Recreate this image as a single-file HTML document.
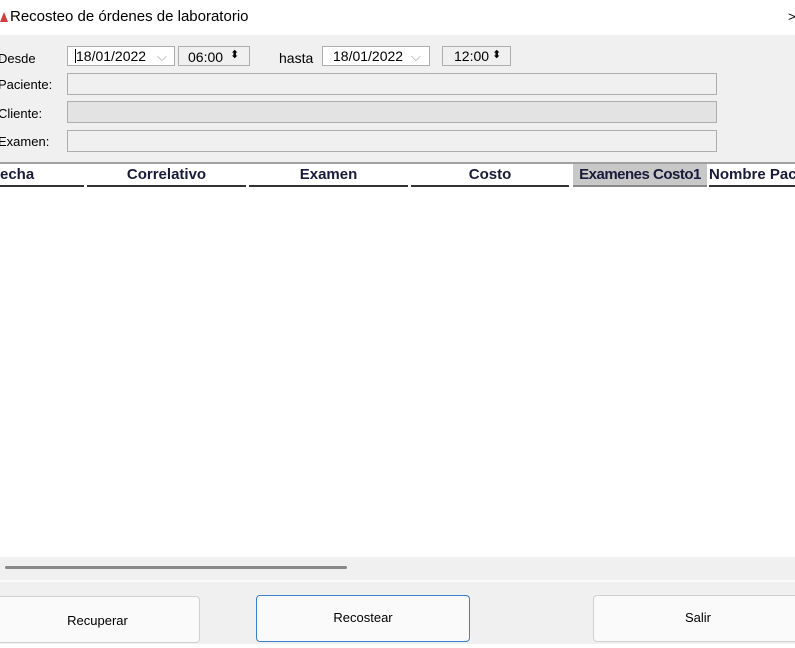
<!DOCTYPE html>
<html><head><style>
*{margin:0;padding:0;box-sizing:border-box}
body{width:795px;height:648px;position:relative;overflow:hidden;background:#fff;font-family:"Liberation Sans","DejaVu Sans",sans-serif;font-size:13px;color:#000}
.a{position:absolute}
.box{position:absolute;border:1px solid #adadad;background:#f0f0f0}
.lbl{position:absolute;font-size:13px}
.hd{position:absolute;top:164px;height:23px;font-weight:bold;font-size:15px;color:#1a1a3a;text-align:center;line-height:22px;border-bottom:2px solid #333;white-space:nowrap;overflow:hidden}
.btn{position:absolute;background:#fafafa;border:1px solid #d0d0d0;border-radius:4px;text-align:center;font-size:13px}
</style></head><body>
<div class="a" style="left:0;top:0;width:795px;height:35px;background:#fff"></div>
<div class="a" style="left:0;top:12px;width:0;height:0;border-left:4px solid transparent;border-right:4px solid transparent;border-bottom:10px solid #d04040"></div>
<div class="lbl" style="left:10px;top:8px;font-size:15px">Recosteo de órdenes de laboratorio</div>
<div class="lbl" style="left:788px;top:9px;font-size:13px">&gt;</div>
<div class="a" style="left:0;top:35px;width:795px;height:128px;background:#f0f0f0"></div>
<div class="lbl" style="left:-2px;top:51px">Desde</div>
<div class="a" style="left:67px;top:46px;width:108px;height:20px;background:#fff;border:1px solid #adadad"></div>
<div class="a" style="left:75px;top:49px;width:1px;height:14px;background:#000"></div>
<div class="lbl" style="left:76px;top:48px;font-size:14px">18/01/2022</div>
<div class="lbl" style="left:157px;top:49px;color:#999">⌵</div>
<div class="box" style="left:178px;top:46px;width:72px;height:20px"></div>
<div class="lbl" style="left:188px;top:49px;font-size:14px">06:00</div>
<div class="lbl" style="left:230px;top:48px;font-size:11px">⬍</div>
<div class="lbl" style="left:279px;top:50px;font-size:14px">hasta</div>
<div class="a" style="left:322px;top:46px;width:108px;height:20px;background:#fff;border:1px solid #adadad"></div>
<div class="lbl" style="left:333px;top:48px;font-size:14px">18/01/2022</div>
<div class="lbl" style="left:411px;top:49px;color:#999">⌵</div>
<div class="box" style="left:442px;top:46px;width:69px;height:20px"></div>
<div class="lbl" style="left:454px;top:48px;font-size:14px">12:00</div>
<div class="lbl" style="left:492px;top:48px;font-size:11px">⬍</div>
<div class="lbl" style="left:-2px;top:77px">Paciente:</div>
<div class="box" style="left:67px;top:73px;width:650px;height:22px"></div>
<div class="lbl" style="left:-2px;top:106px">Cliente:</div>
<div class="box" style="left:67px;top:101px;width:650px;height:22px;background:#e3e3e3"></div>
<div class="lbl" style="left:-2px;top:134px">Examen:</div>
<div class="box" style="left:67px;top:130px;width:650px;height:22px"></div>
<div class="a" style="left:0;top:162px;width:795px;height:2px;background:#a0a0a0"></div>
<div class="hd" style="left:0;width:84px;text-align:left">echa</div>
<div class="hd" style="left:87px;width:159px">Correlativo</div>
<div class="hd" style="left:249px;width:159px">Examen</div>
<div class="hd" style="left:411px;width:158px">Costo</div>
<div class="hd" style="left:573px;width:134px;background:#c8c8c8;border-bottom-color:#888;letter-spacing:-0.5px">Examenes Costo1</div>
<div class="hd" style="left:709px;width:86px;text-align:left">Nombre Paciente</div>
<div class="a" style="left:0;top:557px;width:795px;height:23px;background:#f0f0f0"></div>
<div class="a" style="left:5px;top:566px;width:342px;height:3px;background:#888;border-radius:2px"></div>
<div class="a" style="left:0;top:580px;width:795px;height:2px;background:#fafafa"></div>
<div class="a" style="left:0;top:582px;width:795px;height:66px;background:#f0f0f0"></div>
<div class="a" style="left:0;top:644px;width:795px;height:4px;background:#fff"></div>
<div class="btn" style="left:-5px;top:596px;width:205px;height:47px;line-height:47px">Recuperar</div>
<div class="btn" style="left:256px;top:595px;width:214px;height:47px;line-height:44px;border-color:#3a7fd0">Recostear</div>
<div class="btn" style="left:593px;top:595px;width:210px;height:47px;line-height:44px">Salir</div>
</body></html>
